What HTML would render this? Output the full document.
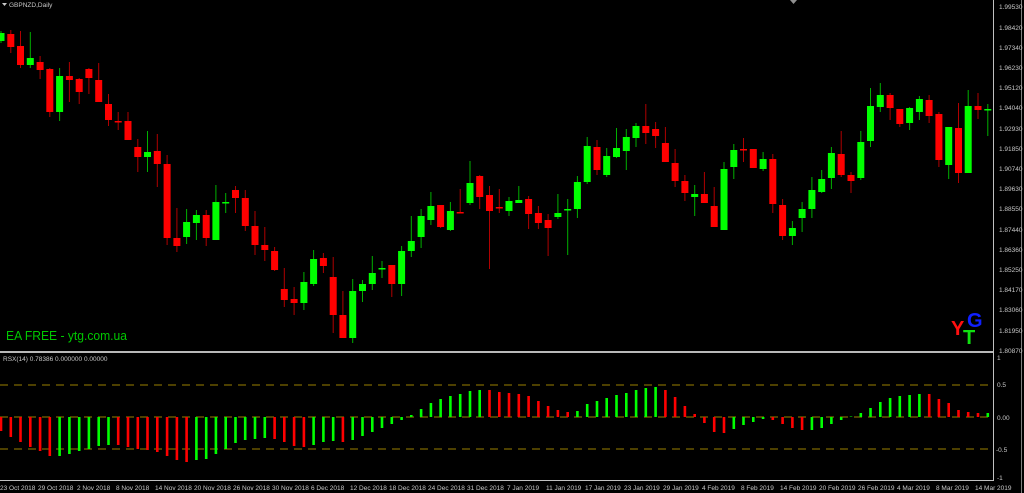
<!DOCTYPE html>
<html><head><meta charset="utf-8"><style>
html,body{margin:0;padding:0;background:#000;width:1024px;height:493px;overflow:hidden}
svg{display:block}
text{font-family:"Liberation Sans",sans-serif}
</style></head><body>
<svg id="s" width="1024" height="493" xmlns="http://www.w3.org/2000/svg">
<rect width="1024" height="493" fill="#000"/>
<g id="c"></g>
<g id="h"></g>
<rect x="0" y="351" width="994" height="2" fill="#b8b8b8"/>
<rect x="993" y="0" width="1" height="481" fill="#c0c0c0"/>
<rect x="1021" y="0" width="1" height="493" fill="#808080"/>
<rect x="0" y="480" width="994" height="1" fill="#c0c0c0"/>
<g font-size="6.5" fill="#c8c8c8">
<text x="999" y="9">1.99530</text><text x="999" y="30">1.98420</text><text x="999" y="50">1.97340</text><text x="999" y="70">1.96230</text><text x="999" y="90">1.95120</text><text x="999" y="110">1.94040</text><text x="999" y="131">1.92930</text><text x="999" y="151">1.91850</text><text x="999" y="171">1.90740</text><text x="999" y="191">1.89630</text><text x="999" y="211">1.88550</text><text x="999" y="232">1.87440</text><text x="999" y="252">1.86360</text><text x="999" y="272">1.85250</text><text x="999" y="292">1.84170</text><text x="999" y="312">1.83060</text><text x="999" y="333">1.81950</text><text x="999" y="353">1.80870</text>
<text x="997" y="360">1</text><text x="997" y="387">0.5</text><text x="997" y="420">0.00</text><text x="996" y="452">-0.5</text><text x="997" y="480">-1</text>
<text x="3" y="361">RSX(14) 0.78386 0.000000 0.00000</text>
<text x="9" y="7">GBPNZD,Daily</text>
</g>
<path d="M2 3h5l-2.5 3z" fill="#c8c8c8"/>
<path d="M790 0h7l-3.5 4z" fill="#909090"/>
<g font-size="6.5" fill="#c8c8c8">
<text x="0" y="490">23 Oct 2018</text><text x="38" y="490">29 Oct 2018</text><text x="77" y="490">2 Nov 2018</text><text x="116" y="490">8 Nov 2018</text><text x="155" y="490">14 Nov 2018</text><text x="194" y="490">20 Nov 2018</text><text x="233" y="490">26 Nov 2018</text><text x="272" y="490">30 Nov 2018</text><text x="311" y="490">6 Dec 2018</text><text x="350" y="490">12 Dec 2018</text><text x="389" y="490">18 Dec 2018</text><text x="428" y="490">24 Dec 2018</text><text x="467" y="490">31 Dec 2018</text><text x="507" y="490">7 Jan 2019</text><text x="546" y="490">11 Jan 2019</text><text x="585" y="490">17 Jan 2019</text><text x="624" y="490">23 Jan 2019</text><text x="663" y="490">29 Jan 2019</text><text x="702" y="490">4 Feb 2019</text><text x="741" y="490">8 Feb 2019</text><text x="780" y="490">14 Feb 2019</text><text x="819" y="490">20 Feb 2019</text><text x="858" y="490">26 Feb 2019</text><text x="897" y="490">4 Mar 2019</text><text x="936" y="490">8 Mar 2019</text><text x="975" y="490">14 Mar 2019</text>
</g>
<text x="6" y="340" font-size="13" fill="#00c800" textLength="121" lengthAdjust="spacingAndGlyphs">EA FREE - ytg.com.ua</text>
<g font-weight="bold" font-size="20">
<text x="951" y="335" fill="#ff1010">Y</text>
<text x="963" y="344" fill="#10e010">T</text>
<text x="967" y="327" fill="#1020ff">G</text>
</g>
</svg>
<script>
var C=[
['G',33,41,31,43],['R',34,47,30,53],['R',46,65,31,68],['G',58,65,32,68],['R',62,70,56,79],['R',69,112,68,117],['G',76,112,68,121],['R',76,80,62,102],['R',79,92,78,104],['R',69,78,68,94],
['R',80,102,63,102],['R',104,120,94,126],['R',121,121,112,130],['R',121,140,112,140],['R',147,157,139,172],['G',152,157,131,172],['R',151,164,134,187],['R',164,238,155,245],['R',238,246,208,252],['G',222,237,209,244],
['G',215,223,210,240],['R',215,238,210,246],['G',202,240,185,240],['G',202,202,193,213],['R',190,198,186,213],['R',198,226,190,231],['R',226,245,211,255],['R',245,250,227,261],['R',251,270,247,271],['R',289,300,268,307],
['R',299,303,287,315],['G',282,303,272,310],['G',259,284,250,286],['R',258,266,253,273],['R',277,315,257,333],['R',315,338,291,338],['G',291,338,279,343],['G',284,291,280,302],['G',273,284,256,290],['G',268,268,261,278],
['R',265,284,265,297],['G',251,284,246,296],['G',241,251,216,257],['G',216,237,209,248],['G',206,220,192,225],['R',205,227,205,228],['G',211,230,202,231],['R',212,213,189,213],['G',183,203,161,205],['R',176,197,175,209],
['R',195,211,186,269],['R',207,207,189,213],['G',201,211,197,216],['G',200,203,186,203],['R',199,214,196,229],['R',213,223,206,229],['R',220,228,214,256],['G',213,217,194,219],['G',209,210,199,255],['G',182,209,176,218],
['G',146,182,137,184],['R',147,170,140,175],['G',156,175,148,177],['G',148,157,128,158],['G',137,151,129,170],['G',126,138,123,147],['R',126,133,104,144],['R',129,136,122,148],['R',143,162,127,162],['R',163,181,149,187],
['R',181,193,175,201],['G',194,197,185,216],['R',194,203,172,203],['R',206,227,187,227],['G',169,230,162,230],['G',150,167,144,179],['R',149,149,138,162],['R',149,168,149,168],['G',159,169,152,171],['R',159,204,154,213],
['R',205,236,199,240],['G',228,236,221,245],['G',209,218,202,232],['G',190,209,177,218],['G',179,192,170,193],['G',153,178,147,189],['R',154,175,131,177],['R',175,181,172,193],['G',142,178,131,180],['G',106,141,88,147],
['G',95,107,83,112],['R',95,108,93,120],['R',109,124,109,127],['G',108,123,107,130],['G',99,112,96,120],['R',100,116,95,123],['R',114,160,112,167],['G',127,165,127,179],['R',128,173,103,183],['G',106,173,90,173],
['R',106,110,93,119],['G',109,109,104,136]];
var H=[-14,-20,-25,-30,-34,-39,-39,-37,-34,-32,-29,-28,-28,-30,-32,-33,-35,-39,-43,-45,-43,-42,-37,-32,-26,-23,-22,-21,-22,-25,-29,-30,-28,-25,-24,-25,-23,-19,-15,-11,-7,-3,2,8,14,18,21,23,26,27,27,25,24,
23,21,16,11,7,5,6,13,16,19,22,24,27,29,30,27,20,11,3,-6,-15,-16,-12,-8,-5,-2,-3,-7,-11,-13,-13,-11,-7,-3,0.5,4,9,15,19,21,22,23,23,18,14,7,5,4,4];
var HC='RRRRRRGGGGGGRRRRRRRRGGGGGGGGRRRRGGGRGGGGGGGGGGGGGGRRRRRRRRRGGGGGGGGGRRRRRRRGGGGRRRRGGGGGGGGGGGGRRRRRRG';
var g=document.getElementById('c'),h=document.getElementById('h'),o='';
C.forEach(function(c,i){var x=1+9.77*i,gr=c[0]=='G';var bc=gr?'#00ff00':'#ff0000',wc=gr?'#00b000':'#b00000';
o+='<rect x="'+(x-0.5).toFixed(1)+'" y="'+c[3]+'" width="1" height="'+(c[4]-c[3])+'" fill="'+wc+'"/>';
var hh=Math.max(c[2]-c[1],1.5);o+='<rect x="'+(x-3.5).toFixed(1)+'" y="'+c[1]+'" width="7" height="'+hh+'" fill="'+bc+'"/>';});
g.innerHTML=o;o='';
[385,417,449].forEach(function(y){o+='<line x1="0" y1="'+y+'" x2="993" y2="'+y+'" stroke="#9a8000" stroke-width="1" stroke-dasharray="8,6"/>';});
H.forEach(function(v,i){var x=1+9.77*i,col=HC[i]=='G'?'#00ff00':'#ff0000';var y=v>0?417-v:417,hh=Math.abs(v);
o+='<rect x="'+(x-1.3).toFixed(1)+'" y="'+y+'" width="2.6" height="'+hh+'" fill="'+col+'"/>';});
h.innerHTML=o;
</script>
</body></html>
